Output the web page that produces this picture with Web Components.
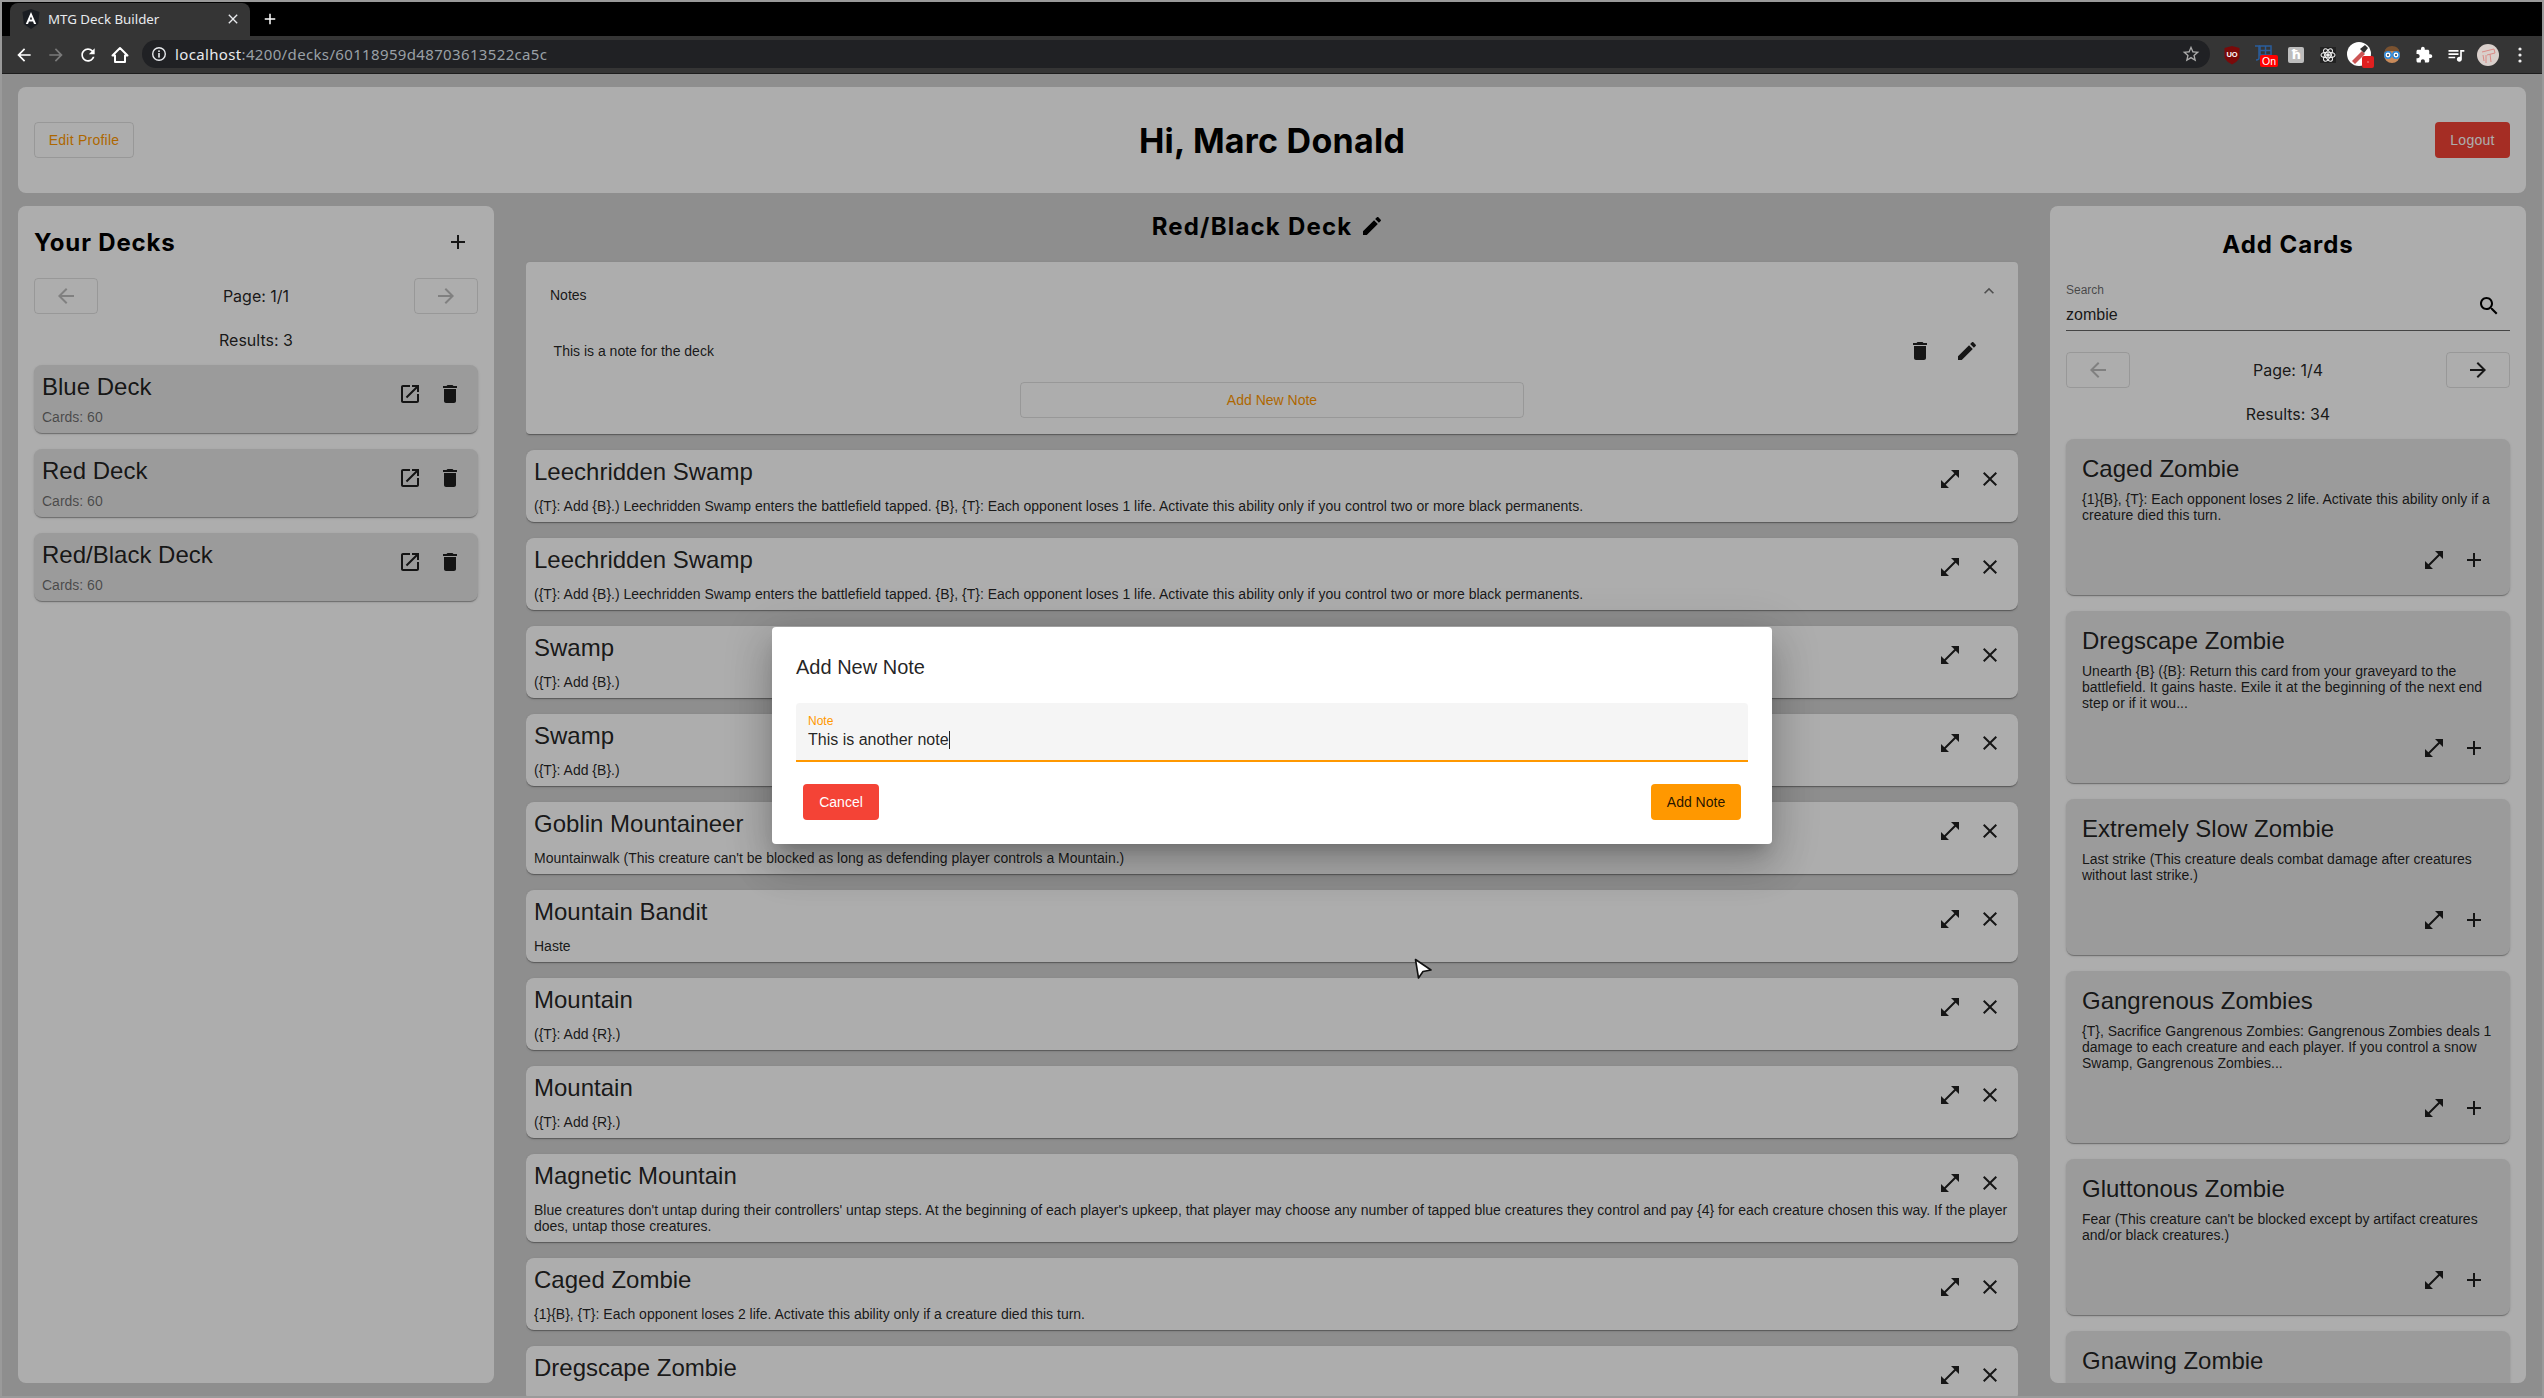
<!DOCTYPE html>
<html lang="en"><head><meta charset="utf-8"><title>MTG Deck Builder</title>
<style>
html,body{margin:0;padding:0;height:100%;overflow:hidden}
body{background:#9a9a9a;padding:2px;box-sizing:border-box;font-family:"Liberation Sans",sans-serif;position:relative;width:2544px;height:1398px}
</style></head><body>
<browser-chrome></browser-chrome>
<app-page>
  <top-bar>
    <ui-btn slot="left" kind="stroked" w="100">Edit Profile</ui-btn>
    Hi, Marc Donald
    <ui-btn slot="right" kind="warn" w="75">Logout</ui-btn>
  </top-bar>
  <deck-layout>
    <side-panel slot="left">
      <panel-head>Your Decks<icon-btn slot="end" icon="add"></icon-btn></panel-head>
      <pager-bar page="Page: 1/1" results="Results: 3" next-disabled></pager-bar>
      <item-stack>
        <deck-item>Blue Deck</deck-item>
        <deck-item>Red Deck</deck-item>
        <deck-item>Red/Black Deck</deck-item>
      </item-stack>
    </side-panel>
    <center-column slot="center">
      <deck-title>Red/Black Deck</deck-title>
      <item-stack>
        <notes-panel>This is a note for the deck</notes-panel>
        <card-row><span slot="name">Leechridden Swamp</span>({T}: Add {B}.) Leechridden Swamp enters the battlefield tapped. {B}, {T}: Each opponent loses 1 life. Activate this ability only if you control two or more black permanents.</card-row>
        <card-row><span slot="name">Leechridden Swamp</span>({T}: Add {B}.) Leechridden Swamp enters the battlefield tapped. {B}, {T}: Each opponent loses 1 life. Activate this ability only if you control two or more black permanents.</card-row>
        <card-row><span slot="name">Swamp</span>({T}: Add {B}.)</card-row>
        <card-row><span slot="name">Swamp</span>({T}: Add {B}.)</card-row>
        <card-row><span slot="name">Goblin Mountaineer</span>Mountainwalk (This creature can't be blocked as long as defending player controls a Mountain.)</card-row>
        <card-row><span slot="name">Mountain Bandit</span>Haste</card-row>
        <card-row><span slot="name">Mountain</span>({T}: Add {R}.)</card-row>
        <card-row><span slot="name">Mountain</span>({T}: Add {R}.)</card-row>
        <card-row><span slot="name">Magnetic Mountain</span>Blue creatures don't untap during their controllers' untap steps. At the beginning of each player's upkeep, that player may choose any number of tapped blue creatures they control and pay {4} for each creature chosen this way. If the player does, untap those creatures.</card-row>
        <card-row><span slot="name">Caged Zombie</span>{1}{B}, {T}: Each opponent loses 2 life. Activate this ability only if a creature died this turn.</card-row>
        <card-row><span slot="name">Dregscape Zombie</span></card-row>
      </item-stack>
    </center-column>
    <side-panel slot="right">
      <panel-head center>Add Cards</panel-head>
      <search-field>zombie</search-field>
      <pager-bar page="Page: 1/4" results="Results: 34"></pager-bar>
      <item-stack>
        <card-tile><span slot="name">Caged Zombie</span>{1}{B}, {T}: Each opponent loses 2 life. Activate this ability only if a creature died this turn.</card-tile>
        <card-tile><span slot="name">Dregscape Zombie</span>Unearth {B} ({B}: Return this card from your graveyard to the battlefield. It gains haste. Exile it at the beginning of the next end step or if it wou...</card-tile>
        <card-tile><span slot="name">Extremely Slow Zombie</span>Last strike (This creature deals combat damage after creatures without last strike.)</card-tile>
        <card-tile><span slot="name">Gangrenous Zombies</span>{T}, Sacrifice Gangrenous Zombies: Gangrenous Zombies deals 1 damage to each creature and each player. If you control a snow Swamp, Gangrenous Zombies...</card-tile>
        <card-tile><span slot="name">Gluttonous Zombie</span>Fear (This creature can't be blocked except by artifact creatures and/or black creatures.)</card-tile>
        <card-tile><span slot="name">Gnawing Zombie</span></card-tile>
      </item-stack>
    </side-panel>
  </deck-layout>
  <note-dialog slot="overlay"></note-dialog>
</app-page>
<mouse-cursor></mouse-cursor>
<script>
const P={
add:'M19 13h-6v6h-2v-6H5v-2h6V5h2v6h6v2z',
delete:'M6 19c0 1.1.9 2 2 2h8c1.1 0 2-.9 2-2V7H6v12zM19 4h-3.5l-1-1h-5l-1 1H5v2h14V4z',
open:'M19 19H5V5h7V3H5c-1.11 0-2 .9-2 2v14c0 1.1.89 2 2 2h14c1.1 0 2-.9 2-2v-7h-2v7zM14 3v2h3.59l-9.83 9.83 1.41 1.41L19 6.41V10h2V3h-7z',
edit:'M3 17.25V21h3.75L17.81 9.94l-3.75-3.75L3 17.25zM20.71 7.04c.39-.39.39-1.02 0-1.41l-2.34-2.34c-.39-.39-1.02-.39-1.41 0l-1.83 1.83 3.75 3.75 1.83-1.83z',
close:'M19 6.41L17.59 5 12 10.59 6.41 5 5 6.41 10.59 12 5 17.59 6.41 19 12 13.41 17.59 19 19 17.59 13.41 12z',
full:'M21 11V3h-8l3.29 3.29-10 10L3 13v8h8l-3.29-3.29 10-10z',
search:'M15.5 14h-.79l-.28-.27C15.41 12.59 16 11.11 16 9.5 16 5.91 13.09 3 9.5 3S3 5.91 3 9.5 5.91 16 9.5 16c1.61 0 3.09-.59 4.23-1.57l.27.28v.79l5 4.99L20.49 19l-4.99-5zm-6 0C7.01 14 5 11.99 5 9.5S7.01 5 9.5 5 14 7.01 14 9.5 11.99 14 9.5 14z',
back:'M20 11H7.83l5.59-5.59L12 4l-8 8 8 8 1.41-1.41L7.83 13H20v-2z',
forward:'M12 4l-1.41 1.41L16.17 11H4v2h12.17l-5.58 5.59L12 20l8-8z',
refresh:'M17.65 6.35C16.2 4.9 14.21 4 12 4c-4.42 0-7.99 3.58-7.99 8s3.57 8 7.99 8c3.73 0 6.84-2.55 7.73-6h-2.08c-.82 2.33-3.04 4-5.65 4-3.31 0-6-2.69-6-6s2.69-6 6-6c1.66 0 3.14.69 4.22 1.78L13 11h7V4l-2.35 2.35z',
star:'M22 9.24l-7.19-.62L12 2 9.19 8.63 2 9.24l5.46 4.73L5.82 21 12 17.27 18.18 21l-1.63-7.03L22 9.24zM12 15.4l-3.76 2.27 1-4.28-3.32-2.88 4.38-.38L12 6.1l1.71 4.04 4.38.38-3.32 2.88 1 4.28L12 15.4z',
puzzle:'M20.5 11H19V7c0-1.1-.9-2-2-2h-4V3.5C13 2.12 11.88 1 10.5 1S8 2.12 8 3.5V5H4c-1.1 0-1.99.9-1.99 2v3.8H3.5c1.49 0 2.7 1.21 2.7 2.7s-1.21 2.7-2.7 2.7H2V20c0 1.1.9 2 2 2h3.8v-1.5c0-1.49 1.21-2.7 2.7-2.7 1.49 0 2.7 1.21 2.7 2.7V22H17c1.1 0 2-.9 2-2v-4h1.5c1.38 0 2.5-1.12 2.5-2.5S21.88 11 20.5 11z',
queue:'M15 6H3v2h12V6zm0 4H3v2h12v-2zM3 16h8v-2H3v2zM17 6v8.18c-.31-.11-.65-.18-1-.18-1.66 0-3 1.34-3 3s1.34 3 3 3 3-1.34 3-3V8h3V6h-5z',
less:'M12 8l-6 6 1.41 1.41L12 10.83l4.59 4.58L18 14z'
};
const svg=(n,s=24,c='currentColor')=>`<svg width="${s}" height="${s}" viewBox="0 0 24 24" fill="${c}" style="display:block"><path d="${P[n]}"/></svg>`;
const HEAD='"Inter","Open Sans",sans-serif';
function def(name,html,init){
  customElements.define(name,class extends HTMLElement{
    constructor(){super();this.attachShadow({mode:'open'});}
    connectedCallback(){this.shadowRoot.innerHTML=typeof html==='function'?html(this):html;if(init)init(this);}
  });
}
def('ui-btn',e=>{
 const k=e.getAttribute('kind');
 const st={stroked:'background:transparent;color:#ff9800;border:1px solid rgba(0,0,0,.12);',warn:'background:#f44336;color:#fff;',accent:'background:#ff9800;color:rgba(0,0,0,.87);'}[k]||'';
 const w=e.getAttribute('w');
 return `<style>:host{display:inline-flex;height:36px;box-sizing:border-box;border-radius:4px;align-items:center;justify-content:center;white-space:nowrap;font:14px "Liberation Sans",sans-serif;${w?`width:${w}px;`:''}${st}}</style><slot></slot>`;
});
def('icon-btn',e=>{
 const c=e.getAttribute('color')||'rgba(0,0,0,.87)';
 return `<style>:host{display:flex;width:40px;height:40px;flex:none;align-items:center;justify-content:center;color:${c}}</style>${svg(e.getAttribute('icon'))}`;
});
def('app-page',`<style>:host{display:block;position:relative;height:1322px;overflow:hidden;background:#d1d1d1;box-sizing:border-box;padding:13px 16px 0}
.ov{position:absolute;inset:0;background:rgba(0,0,0,.32);display:flex;align-items:center;justify-content:center}</style>
<slot></slot><div class="ov"><slot name="overlay"></slot></div>`);
def('top-bar',`<style>:host{display:grid;grid-template-columns:1fr auto 1fr;align-items:center;height:106px;box-sizing:border-box;padding:0 16px;background:#fff;border-radius:8px;color:#000;font:700 34px ${HEAD};letter-spacing:.25px}
.s{display:flex;align-items:center}.r{justify-content:flex-end}</style><div class="s"><slot name="left"></slot></div><div><slot></slot></div><div class="s r"><slot name="right"></slot></div>`);
def('deck-layout',`<style>:host{display:grid;grid-template-columns:476px 1fr 476px;column-gap:32px;margin-top:13px;height:1190px}</style><slot name="left"></slot><slot name="center"></slot><slot name="right"></slot>`);
def('side-panel',`<style>:host{display:block;height:1177px;box-sizing:border-box;background:#fff;border-radius:8px;padding:16px;overflow:hidden}</style><slot></slot>`);
def('center-column',`<style>:host{display:block;overflow:hidden;height:1190px}</style><slot></slot>`);
def('panel-head',e=>`<style>:host{display:flex;align-items:center;justify-content:${e.hasAttribute('center')?'center':'space-between'};height:${e.hasAttribute('center')?44:40}px;font:700 24px ${HEAD};color:#000;letter-spacing:${e.hasAttribute('center')?'.95px':'.85px'}}</style><slot></slot><slot name="end"></slot>`);
def('pager-bar',e=>{
 const nd=e.hasAttribute('next-disabled');
 return `<style>:host{display:block;margin-top:16px;font:400 16px ${HEAD};color:rgba(0,0,0,.87)}
 .b{display:grid;grid-template-columns:64px 1fr 64px;align-items:center;text-align:center}
 .p{height:36px;box-sizing:border-box;border:1px solid rgba(0,0,0,.12);border-radius:4px;display:flex;align-items:center;justify-content:center}
 .r{height:51px;display:flex;align-items:center;justify-content:center}</style>
 <div class="b"><div class="p" style="color:rgba(0,0,0,.26)">${svg('back')}</div><div>${e.getAttribute('page')}</div><div class="p" style="color:${nd?'rgba(0,0,0,.26)':'rgba(0,0,0,.87)'}">${svg('forward')}</div></div>
 <div class="r">${e.getAttribute('results')}</div>`;
});
def('item-stack',`<style>:host{display:flex;flex-direction:column;gap:16px}</style><slot></slot>`);
const SH='box-shadow:0 2px 1px -1px rgba(0,0,0,.2),0 1px 1px 0 rgba(0,0,0,.14),0 1px 3px 0 rgba(0,0,0,.12);';
def('deck-item',`<style>:host{display:flex;flex:none;height:68px;box-sizing:border-box;padding:8px;background:#e5e5e5;border-radius:8px;${SH}font-family:"Liberation Sans",sans-serif}
.m{flex:1}.t{font-size:24px;line-height:28px;color:rgba(0,0,0,.87)}.s{font-size:14px;line-height:16px;margin-top:8px;color:rgba(0,0,0,.54)}
.a{display:flex;margin:1px 0 0 0}</style>
<div class="m"><div class="t"><slot></slot></div><div class="s">Cards: 60</div></div><div class="a"><icon-btn icon="open"></icon-btn><icon-btn icon="delete"></icon-btn></div>`);
def('deck-title',`<style>:host{display:flex;justify-content:center;align-items:center;height:40px;margin-bottom:16px;font:700 24px ${HEAD};letter-spacing:1.2px;color:#000}</style><slot></slot><icon-btn icon="edit" color="#000"></icon-btn>`);
def('notes-panel',`<style>:host{display:block;height:172px;box-sizing:border-box;background:#fff;border-radius:4px;${SH}font:14px "Liberation Sans",sans-serif;color:rgba(0,0,0,.87);padding:0 24px}
.h{display:flex;justify-content:space-between;align-items:center;height:66px;margin-right:-5px}
.h i{display:block;margin-top:-8px;color:rgba(0,0,0,.54)}
.n{display:flex;align-items:center;justify-content:space-between;height:40px;margin-top:3px;padding-left:3.6px}
.a{display:flex;margin-right:7px;gap:7px}.w{display:flex;justify-content:center;margin-top:11px}
ui-btn{width:504px}</style>
<div class="h"><span>Notes</span><i>${svg('less',20)}</i></div>
<div class="n"><span><slot></slot></span><div class="a"><icon-btn icon="delete"></icon-btn><icon-btn icon="edit"></icon-btn></div></div>
<div class="w"><ui-btn kind="stroked">Add New Note</ui-btn></div>`);
def('card-row',`<style>:host{display:block;flex:none;box-sizing:border-box;padding:8px;background:#fff;border-radius:8px;${SH}font-family:"Liberation Sans",sans-serif;color:rgba(0,0,0,.87)}
.h{display:flex;justify-content:space-between;height:28px;font-size:24px;line-height:28px}
.a{display:flex;height:40px;margin:1px 0 0 0}.d{font-size:14px;line-height:16px;margin-top:12px}</style>
<div class="h"><slot name="name"></slot><div class="a"><icon-btn icon="full"></icon-btn><icon-btn icon="close"></icon-btn></div></div><div class="d"><slot></slot></div>`);
def('card-tile',`<style>:host{display:block;flex:none;box-sizing:border-box;padding:16px 16px 15px;background:#e5e5e5;border-radius:8px;${SH}font-family:"Liberation Sans",sans-serif;color:rgba(0,0,0,.87)}
.t{font-size:24px;line-height:28px}.d{font-size:14px;line-height:16px;margin-top:8px}
.a{display:flex;justify-content:flex-end;margin-top:17px;}</style>
<div class="t"><slot name="name"></slot></div><div class="d"><slot></slot></div><div class="a"><icon-btn icon="full"></icon-btn><icon-btn icon="add"></icon-btn></div>`);
def('search-field',`<style>:host{display:block;height:65px;margin-bottom:21px;box-sizing:border-box;border-bottom:1px solid rgba(0,0,0,.6);font-family:"Liberation Sans",sans-serif}
.l{font-size:12px;line-height:14px;padding-top:17px;color:rgba(0,0,0,.6)}.r{display:flex;justify-content:space-between;align-items:flex-start}
.v{font-size:16px;line-height:20px;margin-top:8px;color:rgba(0,0,0,.87)}.i{margin:-3px 9px 0 0;color:#000}</style>
<div class="l">Search</div><div class="r"><div class="v"><slot></slot></div><div class="i">${svg('search')}</div></div>`);
def('note-dialog',`<style>:host{display:block;width:1000px;height:217px;box-sizing:border-box;background:#fff;border-radius:4px;padding:24px;font-family:"Liberation Sans",sans-serif;color:rgba(0,0,0,.87);box-shadow:0 11px 15px -7px rgba(0,0,0,.2),0 24px 38px 3px rgba(0,0,0,.14),0 9px 46px 8px rgba(0,0,0,.12)}
.t{font-size:20px;line-height:32px;margin-bottom:20px}
.f{height:59px;box-sizing:border-box;background:#f5f5f5;border-radius:4px 4px 0 0;border-bottom:2px solid #ff9800;padding:12px 12px 0}
.l{font-size:12px;line-height:12px;color:#ff9800}.v{font-size:16px;line-height:18px;margin-top:4px}
.c{display:inline-block;width:1px;height:18px;background:#222;vertical-align:top}
.a{display:flex;justify-content:space-between;margin-top:22px;padding:0 7px}</style>
<div class="t">Add New Note</div>
<div class="f"><div class="l">Note</div><div class="v">This is another note<span class="c"></span></div></div>
<div class="a"><ui-btn kind="warn" w="76">Cancel</ui-btn><ui-btn kind="accent" w="90">Add Note</ui-btn></div>`);
def('mouse-cursor',`<style>:host{position:absolute;left:1410px;top:955px;display:block}</style>
<svg width="28" height="28" viewBox="0 0 28 28" style="display:block"><path d="M5.5 4.5 L21 15 L13 16.5 L8.500 23 Z" fill="#fff" stroke="#111" stroke-width="1.6" stroke-linejoin="round"/></svg>`);
def('browser-chrome',`<style>:host{display:block;font-family:"Noto Sans",sans-serif;color:#e8eaed}
.strip{height:34px;background:#000;display:flex;align-items:flex-end;padding-left:8px}
.tab{width:240px;height:33px;background:#353535;border-radius:8px 8px 0 0;display:flex;align-items:center;box-sizing:border-box;padding:0 9px 2px 12px;font-size:13.3px;gap:8px}
.tab span{flex:1}
.plus{margin:0 0 1px 11px;height:33px;display:flex;align-items:center;color:#fff}
.bar{height:38px;box-sizing:border-box;background:#353535;border-bottom:1px solid #1d1d1d;display:flex;align-items:center;padding:0 6px}
.i{width:32px;height:32px;flex:none;display:flex;align-items:center;justify-content:center;position:relative;color:#fff}
.url{flex:1;height:28px;margin:-1px 6px 0;background:#202124;border-radius:14px;display:flex;align-items:center;padding:0 9px 0 9px;font-size:15px;letter-spacing:.35px}
.url b{font-weight:400;color:#e8eaed}.url em{font-style:normal;color:#9aa0a6;flex:1}
.badge{position:absolute;font:10.5px "Liberation Sans",sans-serif;color:#fff;background:#f00;border-radius:2px;left:12px;top:16px;width:18px;height:12px;line-height:12px;text-align:center}
</style>
<div class="strip"><div class="tab">
<svg width="18" height="20" viewBox="0 0 18 20"><path d="M9 0 L17.5 3 L16.2 15 L9 20 L1.8 15 L.5 3Z" fill="#1a1d22"/><path d="M9 3 L3.8 15 H6 L7 12.4 H11 L12 15 H14.2Z M7.8 10.6 L9 7.6 L10.2 10.6Z" fill="#fff" fill-rule="evenodd"/></svg>
<span>MTG Deck Builder</span>${svg('close',16)}</div><div class="plus">${svg('add',18)}</div></div>
<div class="bar">
<div class="i">${svg('back',20)}</div><div class="i" style="color:#7a7a7a">${svg('forward',20)}</div><div class="i">${svg('refresh',20)}</div>
<div class="i"><svg width="20" height="20" viewBox="0 0 20 20"><path d="M10 3 L17.5 10.5 H15 V17 H5 V10.5 H2.5 Z" fill="none" stroke="#fff" stroke-width="2" stroke-linejoin="round"/></svg></div>
<div class="url"><svg width="16" height="16" viewBox="0 0 16 16" style="margin-right:8px;flex:none"><circle cx="8" cy="8" r="6.3" fill="none" stroke="#e8eaed" stroke-width="1.4"/><rect x="7.2" y="7" width="1.6" height="4.6" fill="#e8eaed"/><rect x="7.2" y="4.4" width="1.6" height="1.6" fill="#e8eaed"/></svg><b>localhost</b><em>:4200/decks/60118959d48703613522ca5c</em><span style="color:#aaa">${svg('star',20)}</span></div>
<div class="i"><svg width="18" height="20" viewBox="0 0 18 20"><path d="M9 1 L16.5 3 V11 C16.5 15 12 18 9 19.5 C6 18 1.5 15 1.5 11 V3Z" fill="#7a0a0a"/><text x="9" y="12" font-family="Liberation Sans" font-weight="700" font-size="7.5" fill="#fff" text-anchor="middle">UO</text></svg></div>
<div class="i"><svg width="20" height="20" viewBox="0 0 20 20" style="margin-top:-4px" fill="none" stroke="#2a5d9c" stroke-width="1.5"><rect x="6" y="3" width="11" height="9"/><path d="M11.500 3V12M6 7.500H17M1 3H6M5 3V15Q5 17 2 17"/></svg><span class="badge">On</span></div>
<div class="i"><div style="width:16px;height:16px;background:#bdbdbd;border-radius:2px;color:#fff;font:700 13px/16px 'DejaVu Sans',sans-serif;text-align:center">ħ</div></div>
<div class="i"><svg width="16" height="16" viewBox="0 0 24 24" style="background:#222" fill="none" stroke="#eee" stroke-width="1.6"><ellipse cx="12" cy="12" rx="10.500" ry="4.200"/><ellipse cx="12" cy="12" rx="10.500" ry="4.200" transform="rotate(60 12 12)"/><ellipse cx="12" cy="12" rx="10.500" ry="4.200" transform="rotate(120 12 12)"/><circle cx="12" cy="12" r="2" fill="#eee"/></svg></div>
<div class="i"><svg width="30" height="30" viewBox="0 0 30 30"><circle cx="14" cy="14" r="12" fill="#fff"/><path d="M7 21 L17 11 L20 14 L10 24Z" fill="#c55"/><path d="M15 9 L20 5 L23 8 L19 13Z" fill="#333"/><rect x="17" y="16" width="12" height="12" rx="2" fill="#e02020"/><rect x="22.500" y="21.500" width="1" height="1" fill="#fff"/></svg></div>
<div class="i"><svg width="20" height="22" viewBox="0 0 20 22"><circle cx="10" cy="11" r="8" fill="#c98a5a"/><path d="M2.500 9 Q3 2 10 2 Q17 2 17.500 9 Q10 5 2.500 9Z" fill="#7a5230"/><circle cx="6" cy="11" r="3.200" fill="#fff" stroke="#2a8ae0" stroke-width="1.500"/><circle cx="14" cy="11" r="3.200" fill="#fff" stroke="#2a8ae0" stroke-width="1.500"/><circle cx="6" cy="11" r="1" fill="#234"/><circle cx="14" cy="11" r="1" fill="#234"/></svg></div>
<div class="i">${svg('puzzle',18)}</div><div class="i">${svg('queue',20)}</div>
<div class="i"><svg width="22" height="22" viewBox="0 0 22 22"><circle cx="11" cy="11" r="11" fill="#d9cfcb"/><path d="M5 8 L17 5 L18 9 L10 11 M9 11 L9 19 M13 10 L14 18 M6 11 L7 17" fill="none" stroke="#d98a86" stroke-width="1"/></svg></div>
<div class="i"><svg width="4" height="16" viewBox="0 0 4 16" fill="#eee"><circle cx="2" cy="2" r="1.600"/><circle cx="2" cy="8" r="1.600"/><circle cx="2" cy="14" r="1.600"/></svg></div>
</div>`);
</script>
</body></html>
